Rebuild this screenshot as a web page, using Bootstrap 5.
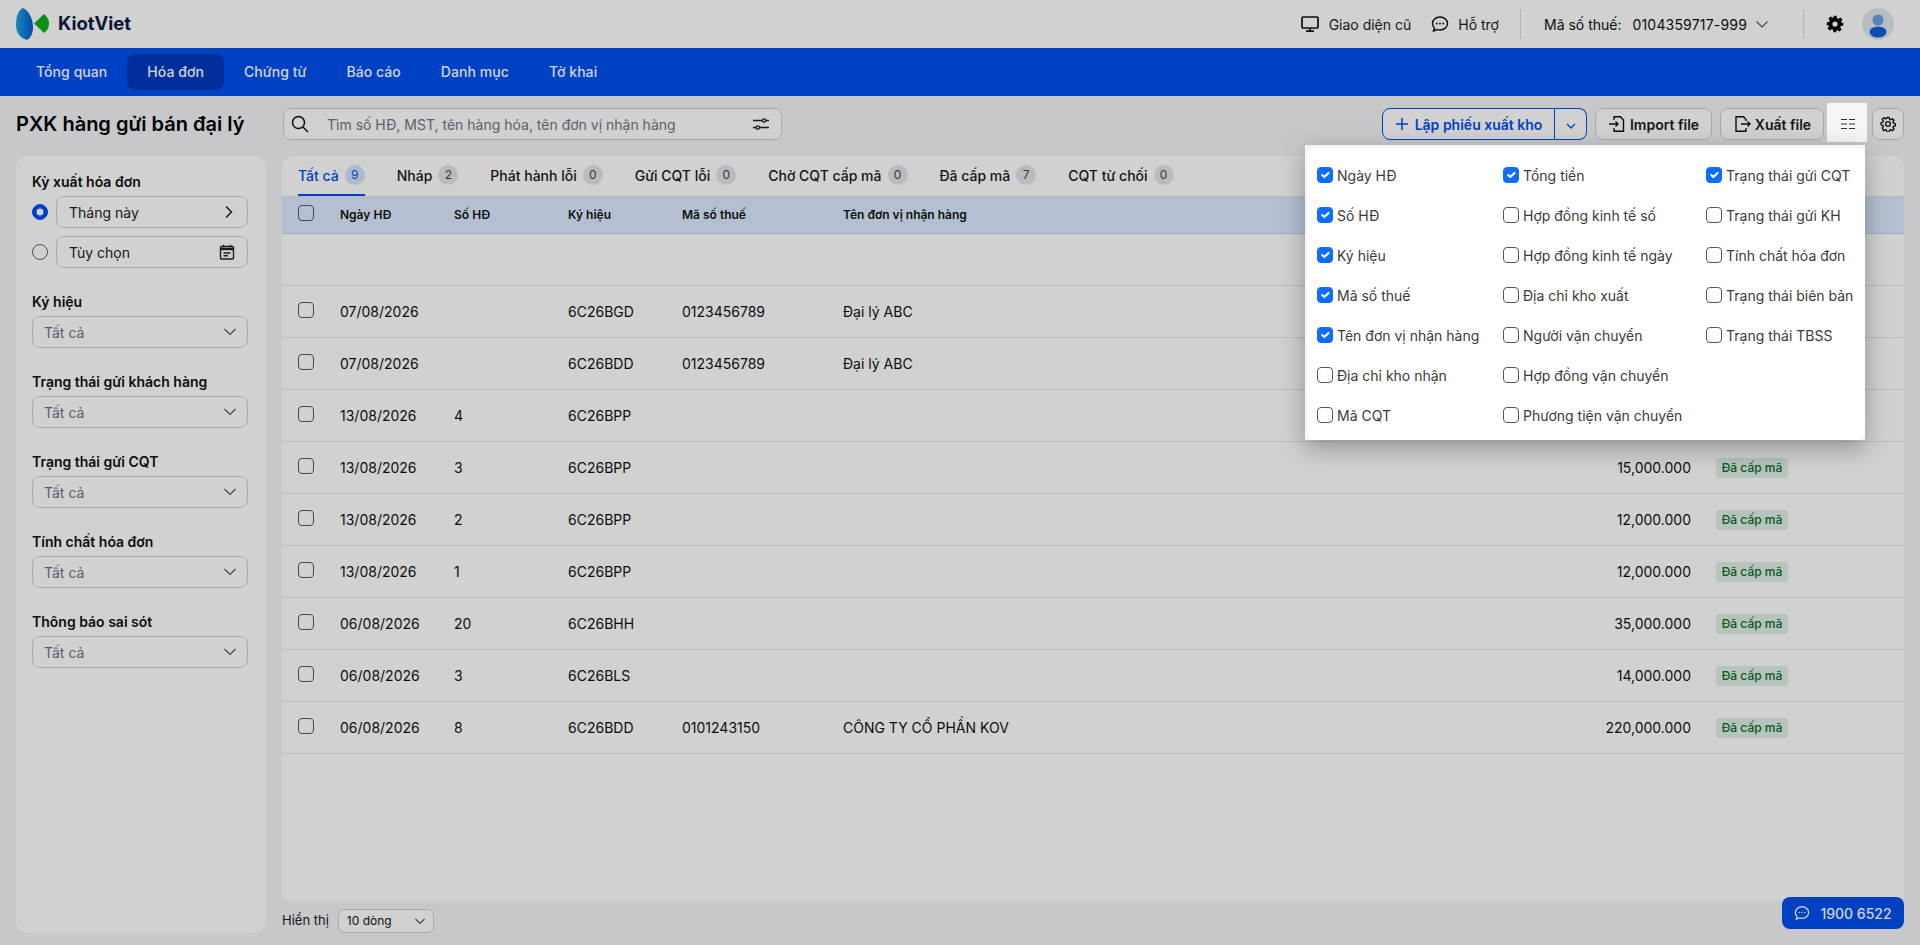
<!DOCTYPE html>
<html lang="vi">
<head>
  <meta charset="UTF-8" />
  <meta name="viewport" content="width=device-width, initial-scale=1.0"/>
  <title>PXK hàng gửi bán đại lý</title>
  <link href="https://cdn.jsdelivr.net/npm/bootstrap@5.3.0/dist/css/bootstrap.min.css" rel="stylesheet" />
  <style>
    html, body { height: 100%; }
    body { background: #f4f5f8; color: #111; font-family: Inter, "Liberation Sans", sans-serif; font-size: 14px; overflow: hidden; }
    .dim-layer { position: fixed; inset: 0; background: rgba(0,0,0,.18); z-index: 10; }

    .top-bar { height: 48px; background: #fff; padding: 0 26px 0 15px; flex-shrink: 0; }
    .brand-text { font-size: 18.5px; font-weight: 700; color: #101c44; margin-left: 7px; }
    .top-item { gap: 10px; color: #1c1c1c; }
    .top-sep { width: 1px; height: 30px; background: #d8dadf; }
    .avatar-wrap { width: 32px; height: 32px; border-radius: 50%; background: #e1e6ef; overflow: hidden; }

    .main-nav { height: 48px; background: #0050f0; padding: 6px 16px; flex-shrink: 0; }
    .main-nav .nav-link { color: #fff; font-weight: 500; padding: 0 20px; height: 36px; line-height: 36px; border-radius: 8px; letter-spacing: .06px; }
    .main-nav .nav-link.active { background: #0039be; }

    .tool-row { height: 60px; padding: 12px 16px 16px; flex-shrink: 0; }
    .page-title { font-size: 20px; font-weight: 600; margin: 0; width: 267px; color: #000; white-space: nowrap; }
    .search-box { width: 499px; height: 32px; background: #fff; border: 1px solid #ced0d4; border-radius: 8px; padding: 0 12px 0 7px; }
    .search-box input { border: 0; outline: 0; flex: 1; padding: 0 0 0 18px; font-size: 14px; background: transparent; }
    .search-box input::placeholder { color: #6f7580; }
    .tool-btn { height: 32px; border: 1px solid #ced0d4; border-radius: 8px; background: #fff; color: #1c1c1c; font-weight: 600; font-size: 14px; padding: 0; gap: 4px; }
    .btn-import { width: 117px; }
    .btn-export { width: 104px; }
    .btn-square { width: 32px; }
    .split-main { width: 173px; height: 32px; border: 1px solid #0050f0; border-radius: 8px 0 0 8px; background: #fff; color: #0050f0; font-weight: 600; font-size: 14px; padding: 0; gap: 6px; }
    .split-arrow { width: 32px; height: 32px; border: 1px solid #0050f0; border-left: 0; border-radius: 0 8px 8px 0; background: #fff; padding: 0; }
    .lit-btn { position: relative; z-index: 20; }
    .lit-btn::before { content: ""; position: absolute; inset: -6px -4px -3px -6px; background: #f4f5f8; z-index: -1; }
    .column-pop { position: absolute; top: 37px; right: 39px; width: 560px; height: 295px; padding: 3px 0 0 2px; background: #f4f5f8; box-shadow: 0 8px 24px rgba(0,0,0,.3); z-index: 20; }
    .column-inner { height: 100%; background: #fff; border-radius: 8px; padding: 7px 0 0 10px; display: grid; grid-auto-flow: column; grid-template-rows: repeat(7, 40px); grid-template-columns: 186px 203px 1fr; }
    .column-inner label { display: flex; align-items: center; gap: 4px; color: #3a3a3a; white-space: nowrap; }
    .form-check-input { margin: 0; width: 16px; height: 16px; border-color: #4c5a6e; flex-shrink: 0; background-color: transparent; }
    .form-check-input[type=checkbox] { border-radius: 4px; }
    .column-inner .form-check-input { background-color: #fff; }
    .column-inner .form-check-input:checked { background-color: #0d6efd; border-color: #0d6efd; }

    .page-body { flex: 1; min-height: 0; padding: 0 16px 12px; gap: 16px; }
    .side-panel { width: 250px; background: #fff; border-radius: 12px; padding: 16px 18px 16px 16px; flex-shrink: 0; }
    .side-label { font-weight: 600; line-height: 20px; margin: 0 0 4px; color: #111; }
    .filter-group { margin-bottom: 24px; }
    .radio-row { gap: 8px; margin-bottom: 8px; }
    .radio-row .form-check-input { border-color: #5c6470; background-color: #fff; }
    .radio-row .form-check-input:checked { background-color: #0050f0; border-color: #0050f0; }
    .pick-box { flex: 1; height: 32px; border: 1px solid #ced0d4; border-radius: 8px; padding: 0 12px; color: #222; }
    .side-select { height: 32px; border-color: #ced0d4; border-radius: 8px; font-size: 14px; padding: 0 11px; color: #6f7580; background-color: #fff;
      background-image: url("data:image/svg+xml,%3csvg xmlns='http://www.w3.org/2000/svg' viewBox='0 0 12 8'%3e%3cpath fill='none' stroke='%23555' stroke-width='1.2' d='M.5 1 6 6.500 11.500 1'/%3e%3c/svg%3e");
      background-size: 12px 8px; background-position: right 11px center; }

    .main-col { flex: 1; min-width: 0; }
    .data-panel { flex: 1; background: #fff; border-radius: 12px 12px 6px 6px; overflow: hidden; }
    .tab-row { height: 41px; padding: 0 16px; gap: 32px; border-bottom: 1px solid #e2e3e7; }
    .tab-row .nav-link { padding: 0; height: 40px; color: #1a1a1a; font-weight: 500; gap: 6px; border-bottom: 2px solid transparent; }
    .tab-row .nav-link.active { color: #0050f0; border-bottom-color: #0050f0; }
    .tab-count { width: 20px; height: 20px; border-radius: 50%; background: #e3e5e9; color: #444; font-size: 12px; font-weight: 400; }
    .active .tab-count { background: #d4e3fa; color: #0050f0; }

    .invoice-grid { table-layout: fixed; margin: 0; width: 100%; }
    .invoice-grid > :not(caption) > * > * { padding: 0; background: transparent; box-shadow: none; color: #111; border-bottom: 1px solid #e5e6ea; vertical-align: middle; }
    .invoice-grid thead th { height: 36px; background: #dcebff; font-size: 12px; font-weight: 600; border-bottom-color: #bdd6f5; }
    .invoice-grid tbody td { height: 52px; }
    .check-cell { padding-left: 16px !important; }
    .check-cell .form-check-input { display: block; margin-bottom: 3px; }
    .amount-cell { text-align: right; padding-right: 25px !important; }
    .status-tag { display: inline-block; height: 20px; line-height: 20px; width: 72px; text-align: center; border-radius: 4px; background: #deefe4; color: #0a6b2d; font-size: 12px; font-weight: 500; }

    .pager-row { height: 24px; margin-top: 8px; gap: 9px; font-size: 13px; color: #222; }
    .pager-select { width: 96px; height: 24px; font-size: 12px; padding: 0 8px; border-color: #ced0d4; border-radius: 6px; color: #111; background-color: #fff;
      background-image: url("data:image/svg+xml,%3csvg xmlns='http://www.w3.org/2000/svg' viewBox='0 0 10 7'%3e%3cpath fill='none' stroke='%23555' stroke-width='1.1' d='M.5 1 5 5.500 9.500 1'/%3e%3c/svg%3e");
      background-size: 10px 7px; background-position: right 8px center; }
    .hotline { position: fixed; right: 16px; bottom: 16px; width: 122px; height: 32px; background: #0050f0; color: #fff; border-radius: 8px; font-size: 14px; font-weight: 500; gap: 10px; z-index: 5; border: 0; padding: 0; }
  </style>
</head>
<body class="d-flex flex-column">

  <header class="top-bar d-flex align-items-center">
    <svg width="36" height="34" viewBox="15 7 36 34">
      <defs><linearGradient id="logoBlue" x1="0" y1="0" x2="1" y2="0"><stop offset="0" stop-color="#1fa8e0"/><stop offset="1" stop-color="#0a5ad4"/></linearGradient></defs>
      <path d="M23 8C18 10 16 17 16 25C16 33 20 38 27 40C31 38 33 33 33 27C33 19 29 11 23 8Z" fill="url(#logoBlue)"/>
      <path d="M44 14C47.500 17 49 20 49 23.500C49 27.500 47.500 30.500 44 33C40 29 37 26 34 23.500C37 21 40 18 44 14Z" fill="#0bb01d"/>
    </svg>
    <span class="brand-text">KiotViet</span>

    <div class="d-flex align-items-center ms-auto">
      <div class="top-item d-flex align-items-center">
        <svg width="18" height="18" viewBox="0 0 18 18" fill="none" stroke="#111" stroke-width="1.700"><rect x="1" y="2" width="16" height="11" rx="1"/><path d="M9 13v3M5 16.200h8"/></svg>
        Giao diện cũ
      </div>
      <div class="top-item d-flex align-items-center ms-3 ps-1" style="margin-right:21px;gap:9px">
        <svg width="18" height="18" viewBox="0 0 18 18" fill="none" stroke="#111" stroke-width="1.400"><path d="M9 2C4.800 2 1.500 4.800 1.500 8.500c0 1.700.7 3.200 1.900 4.400L2.500 16l3.500-1.400c.9.300 1.900.4 3 .4 4.200 0 7.500-2.800 7.500-6.500S13.200 2 9 2Z"/><circle cx="5.800" cy="8.500" r=".9" fill="#111" stroke="none"/><circle cx="9" cy="8.500" r=".9" fill="#111" stroke="none"/><circle cx="12.200" cy="8.500" r=".9" fill="#111" stroke="none"/></svg>
        Hỗ trợ
      </div>
      <span class="top-sep"></span>
      <div class="d-flex align-items-center" style="margin-left:23px">
        <span>Mã số thuế:</span>
        <span style="margin-left:11px;letter-spacing:.18px">0104359717-999</span>
        <svg class="ms-2" width="14" height="14" viewBox="0 0 14 14" fill="none" stroke="#555" stroke-width="1.200"><path d="M1.500 4.500 7 10l5.500-5.500"/></svg>
      </div>
      <span class="top-sep" style="margin-left:34px"></span>
      <svg style="margin-left:22px" width="18" height="18" viewBox="0 0 24 24" fill="#000"><path fill-rule="evenodd" d="M10 1h4l.6 3.200 1.900.8 2.700-1.800 2.800 2.800-1.800 2.700.8 1.900L23 10v4l-3.200.6-.8 1.900 1.800 2.700-2.800 2.800-2.700-1.800-1.900.8L14 23h-4l-.6-3.200-1.900-.8-2.700 1.800-2.800-2.800 1.800-2.700-.8-1.900L1 14v-4l3.200-.6.8-1.900-1.800-2.700 2.800-2.800 2.700 1.800 1.900-.8L10 1Zm2 7.500a3.500 3.500 0 1 0 0 7 3.500 3.500 0 0 0 0-7Z"/></svg>
      <div class="avatar-wrap d-flex justify-content-center" style="margin-left:18px">
        <svg width="32" height="32" viewBox="0 0 32 32"><circle cx="16" cy="12" r="5.500" fill="#6f9fe0"/><ellipse cx="16" cy="24" rx="8.500" ry="5.500" fill="#0f5fd8"/></svg>
      </div>
    </div>
  </header>

  <ul class="nav main-nav">
    <li class="nav-item"><a class="nav-link" href="#">Tổng quan</a></li>
    <li class="nav-item"><a class="nav-link active" href="#">Hóa đơn</a></li>
    <li class="nav-item"><a class="nav-link" href="#">Chứng từ</a></li>
    <li class="nav-item"><a class="nav-link" href="#">Báo cáo</a></li>
    <li class="nav-item"><a class="nav-link" href="#">Danh mục</a></li>
    <li class="nav-item"><a class="nav-link" href="#">Tờ khai</a></li>
  </ul>

  <div class="tool-row d-flex align-items-center">
    <h1 class="page-title">PXK hàng gửi bán đại lý</h1>
    <div class="search-box d-flex align-items-center">
      <svg width="18" height="18" viewBox="0 0 18 18" fill="none" stroke="#111" stroke-width="1.500"><circle cx="7.500" cy="7.500" r="6"/><path d="m12 12 5 5"/></svg>
      <input type="text" placeholder="Tìm số HĐ, MST, tên hàng hóa, tên đơn vị nhận hàng">
      <svg width="16" height="16" viewBox="0 0 16 16" fill="none" stroke="#222" stroke-width="1.300"><path d="M0 4.500h9.500M13 4.500h3M0 11.500h3M6.500 11.500H16"/><circle cx="11.200" cy="4.500" r="1.700"/><circle cx="4.800" cy="11.500" r="1.700"/></svg>
    </div>

    <div class="ms-auto d-flex align-items-center gap-2 position-relative">
      <div class="d-flex">
        <button class="btn split-main d-flex align-items-center justify-content-center">
          <svg width="14" height="14" viewBox="0 0 14 14" stroke="#0050f0" stroke-width="1.500"><path d="M7 1v12M1 7h12"/></svg>
          Lập phiếu xuất kho
        </button>
        <button class="btn split-arrow">
          <svg width="12" height="12" viewBox="0 0 12 12" fill="none" stroke="#0050f0" stroke-width="1.300"><path d="M2 4l4 4 4-4"/></svg>
        </button>
      </div>
      <button class="btn tool-btn btn-import d-flex align-items-center justify-content-center">
        <svg width="18" height="18" viewBox="0 0 18 18" fill="none" stroke="#111" stroke-width="1.400"><path d="M6 5V1.700h6.500L15.500 5v11.300H6V13"/><path d="M1 9h9M7.500 6.500 10 9l-2.500 2.500"/></svg>
        Import file
      </button>
      <button class="btn tool-btn btn-export d-flex align-items-center justify-content-center">
        <svg width="18" height="18" viewBox="0 0 18 18" fill="none" stroke="#111" stroke-width="1.400"><path d="M13 6V4.500L10.500 1.700H3v14.600h10V13"/><path d="M8 9h9M14.500 6.500 17 9l-2.500 2.500"/></svg>
        Xuất file
      </button>
      <button class="btn tool-btn btn-square lit-btn d-flex align-items-center justify-content-center">
        <svg width="14" height="12" viewBox="0 0 14 12" stroke="#333" stroke-width="1"><path d="M0 1.500h6M8 1.500h6M0 6h6M8 6h6M0 10.500h6M8 10.500h6"/></svg>
      </button>
      <button class="btn tool-btn btn-square d-flex align-items-center justify-content-center">
        <svg width="16" height="16" viewBox="0 0 24 24" fill="none" stroke="#111" stroke-width="2"><circle cx="12" cy="12" r="3.500"/><path d="M10.200 2h3.600l.5 2.900 1.900.8 2.400-1.700 2.500 2.500-1.700 2.400.8 1.900 2.800.5v3.600l-2.800.5-.8 1.900 1.700 2.400-2.500 2.500-2.400-1.700-1.900.8-.5 2.900h-3.600l-.5-2.900-1.900-.8-2.400 1.700L3.400 18l1.700-2.400-.8-1.900L1.500 13.200V9.800l2.800-.5.8-1.900L3.400 5l2.500-2.500 2.400 1.700 1.900-.8.400-1.400Z" stroke-linejoin="round"/></svg>
      </button>

      <div class="column-pop">
        <div class="column-inner">
          <label><input class="form-check-input" type="checkbox" checked>Ngày HĐ</label>
          <label><input class="form-check-input" type="checkbox" checked>Số HĐ</label>
          <label><input class="form-check-input" type="checkbox" checked>Ký hiệu</label>
          <label><input class="form-check-input" type="checkbox" checked>Mã số thuế</label>
          <label><input class="form-check-input" type="checkbox" checked>Tên đơn vị nhận hàng</label>
          <label><input class="form-check-input" type="checkbox">Địa chỉ kho nhận</label>
          <label><input class="form-check-input" type="checkbox">Mã CQT</label>
          <label><input class="form-check-input" type="checkbox" checked>Tổng tiền</label>
          <label><input class="form-check-input" type="checkbox">Hợp đồng kinh tế số</label>
          <label><input class="form-check-input" type="checkbox">Hợp đồng kinh tế ngày</label>
          <label><input class="form-check-input" type="checkbox">Địa chỉ kho xuất</label>
          <label><input class="form-check-input" type="checkbox">Người vận chuyển</label>
          <label><input class="form-check-input" type="checkbox">Hợp đồng vận chuyển</label>
          <label><input class="form-check-input" type="checkbox">Phương tiện vận chuyển</label>
          <label><input class="form-check-input" type="checkbox" checked>Trạng thái gửi CQT</label>
          <label><input class="form-check-input" type="checkbox">Trạng thái gửi KH</label>
          <label><input class="form-check-input" type="checkbox">Tính chất hóa đơn</label>
          <label><input class="form-check-input" type="checkbox">Trạng thái biên bản</label>
          <label><input class="form-check-input" type="checkbox">Trạng thái TBSS</label>
        </div>
      </div>
    </div>
  </div>

  <div class="page-body d-flex">
    <aside class="side-panel">
      <div class="filter-group">
        <p class="side-label">Kỳ xuất hóa đơn</p>
        <div class="radio-row d-flex align-items-center">
          <input class="form-check-input" type="radio" name="period" checked>
          <div class="pick-box d-flex align-items-center justify-content-between">
            Tháng này
            <svg width="14" height="14" viewBox="0 0 14 14" fill="none" stroke="#222" stroke-width="1.500"><path d="M5 1.500 10.500 7 5 12.500"/></svg>
          </div>
        </div>
        <div class="radio-row d-flex align-items-center mb-0">
          <input class="form-check-input" type="radio" name="period">
          <div class="pick-box d-flex align-items-center justify-content-between">
            Tùy chọn
            <svg width="16" height="16" viewBox="0 0 16 16" fill="none" stroke="#222" stroke-width="1.400"><rect x="1.500" y="2.500" width="13" height="12.500" rx="1"/><path d="M1.500 5h13" stroke-width="2.400"/><path d="M4.500.8v2.500M11.500.8v2.500M4.500 9h7M4.500 11.700h4.500"/></svg>
          </div>
        </div>
      </div>
      <div class="filter-group">
        <p class="side-label">Ký hiệu</p>
        <select class="form-select side-select"><option>Tất cả</option></select>
      </div>
      <div class="filter-group">
        <p class="side-label">Trạng thái gửi khách hàng</p>
        <select class="form-select side-select"><option>Tất cả</option></select>
      </div>
      <div class="filter-group">
        <p class="side-label">Trạng thái gửi CQT</p>
        <select class="form-select side-select"><option>Tất cả</option></select>
      </div>
      <div class="filter-group">
        <p class="side-label">Tính chất hóa đơn</p>
        <select class="form-select side-select"><option>Tất cả</option></select>
      </div>
      <div class="filter-group">
        <p class="side-label">Thông báo sai sót</p>
        <select class="form-select side-select"><option>Tất cả</option></select>
      </div>
    </aside>

    <main class="main-col d-flex flex-column">
      <div class="data-panel">
        <ul class="nav tab-row">
          <li class="nav-item"><a class="nav-link active d-flex align-items-center" href="#">Tất cả <span class="tab-count d-flex align-items-center justify-content-center">9</span></a></li>
          <li class="nav-item"><a class="nav-link d-flex align-items-center" href="#">Nháp <span class="tab-count d-flex align-items-center justify-content-center">2</span></a></li>
          <li class="nav-item"><a class="nav-link d-flex align-items-center" href="#">Phát hành lỗi <span class="tab-count d-flex align-items-center justify-content-center">0</span></a></li>
          <li class="nav-item"><a class="nav-link d-flex align-items-center" href="#">Gửi CQT lỗi <span class="tab-count d-flex align-items-center justify-content-center">0</span></a></li>
          <li class="nav-item"><a class="nav-link d-flex align-items-center" href="#">Chờ CQT cấp mã <span class="tab-count d-flex align-items-center justify-content-center">0</span></a></li>
          <li class="nav-item"><a class="nav-link d-flex align-items-center" href="#">Đã cấp mã <span class="tab-count d-flex align-items-center justify-content-center">7</span></a></li>
          <li class="nav-item"><a class="nav-link d-flex align-items-center" href="#">CQT từ chối <span class="tab-count d-flex align-items-center justify-content-center">0</span></a></li>
        </ul>
        <table class="table invoice-grid">
          <colgroup><col style="width:58px"><col style="width:114px"><col style="width:114px"><col style="width:114px"><col style="width:161px"><col><col style="width:216px"><col style="width:188px"></colgroup>
          <thead>
            <tr><th class="check-cell"><input class="form-check-input" type="checkbox"></th><th>Ngày HĐ</th><th>Số HĐ</th><th>Ký hiệu</th><th>Mã số thuế</th><th>Tên đơn vị nhận hàng</th><th></th><th></th></tr>
          </thead>
          <tbody>
            <tr><td></td><td></td><td></td><td></td><td></td><td></td><td></td><td></td></tr>
            <tr><td class="check-cell"><input class="form-check-input" type="checkbox"></td><td>07/08/2026</td><td></td><td>6C26BGD</td><td>0123456789</td><td>Đại lý ABC</td><td></td><td></td></tr>
            <tr><td class="check-cell"><input class="form-check-input" type="checkbox"></td><td>07/08/2026</td><td></td><td>6C26BDD</td><td>0123456789</td><td>Đại lý ABC</td><td></td><td></td></tr>
            <tr><td class="check-cell"><input class="form-check-input" type="checkbox"></td><td>13/08/2026</td><td>4</td><td>6C26BPP</td><td></td><td></td><td></td><td></td></tr>
            <tr><td class="check-cell"><input class="form-check-input" type="checkbox"></td><td>13/08/2026</td><td>3</td><td>6C26BPP</td><td></td><td></td><td class="amount-cell">15,000.000</td><td><span class="status-tag">Đã cấp mã</span></td></tr>
            <tr><td class="check-cell"><input class="form-check-input" type="checkbox"></td><td>13/08/2026</td><td>2</td><td>6C26BPP</td><td></td><td></td><td class="amount-cell">12,000.000</td><td><span class="status-tag">Đã cấp mã</span></td></tr>
            <tr><td class="check-cell"><input class="form-check-input" type="checkbox"></td><td>13/08/2026</td><td>1</td><td>6C26BPP</td><td></td><td></td><td class="amount-cell">12,000.000</td><td><span class="status-tag">Đã cấp mã</span></td></tr>
            <tr><td class="check-cell"><input class="form-check-input" type="checkbox"></td><td>06/08/2026</td><td>20</td><td>6C26BHH</td><td></td><td></td><td class="amount-cell">35,000.000</td><td><span class="status-tag">Đã cấp mã</span></td></tr>
            <tr><td class="check-cell"><input class="form-check-input" type="checkbox"></td><td>06/08/2026</td><td>3</td><td>6C26BLS</td><td></td><td></td><td class="amount-cell">14,000.000</td><td><span class="status-tag">Đã cấp mã</span></td></tr>
            <tr><td class="check-cell"><input class="form-check-input" type="checkbox"></td><td>06/08/2026</td><td>8</td><td>6C26BDD</td><td>0101243150</td><td>CÔNG TY CỔ PHẦN KOV</td><td class="amount-cell">220,000.000</td><td><span class="status-tag">Đã cấp mã</span></td></tr>
          </tbody>
        </table>
      </div>
      <div class="pager-row d-flex align-items-center">
        <span>Hiển thị</span>
        <select class="form-select pager-select"><option>10 dòng</option></select>
      </div>
    </main>
  </div>

  <button class="btn hotline d-flex align-items-center justify-content-center">
    <svg width="16" height="16" viewBox="0 0 18 18" fill="none" stroke="#fff" stroke-width="1.500"><path d="M9 2C4.800 2 1.500 4.800 1.500 8.500c0 1.700.7 3.200 1.900 4.400L2.500 16l3.500-1.400c.9.300 1.900.4 3 .4 4.200 0 7.500-2.800 7.500-6.500S13.200 2 9 2Z"/><circle cx="5.800" cy="8.500" r=".9" fill="#fff" stroke="none"/><circle cx="9" cy="8.500" r=".9" fill="#fff" stroke="none"/><circle cx="12.200" cy="8.500" r=".9" fill="#fff" stroke="none"/></svg>
    1900 6522
  </button>

  <div class="dim-layer"></div>

  <script src="https://cdn.jsdelivr.net/npm/bootstrap@5.3.0/dist/js/bootstrap.bundle.min.js"></script>
</body>
</html>
